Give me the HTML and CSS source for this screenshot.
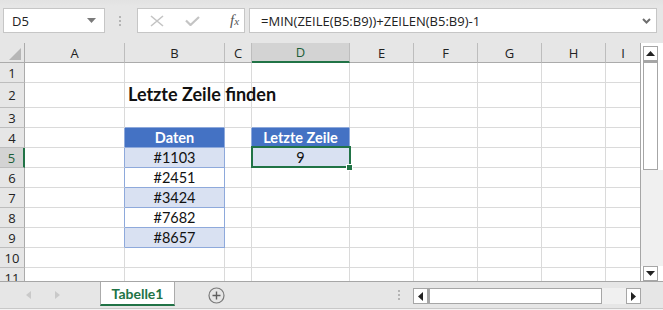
FILE: index.html
```html
<!DOCTYPE html>
<html lang="de">

<head>
  <meta charset="UTF-8">
  <title>Letzte Zeile finden</title>
  <link rel="stylesheet" href="styles.css">
</head>

<body>
  <div class="formula-bar">
    <div class="name-box">
      <span>D5</span>
      <svg class="nb-arrow" width="9" height="5" viewBox="0 0 9 5"><path d="M0 0h9L4.5 5z" fill="#7a7a7a"/></svg>
    </div>
    <div class="grip"><i></i><i></i><i></i></div>
    <div class="fx-buttons">
      <svg width="14" height="12" viewBox="0 0 14 12"><path d="M1 1l12 10M13 1L1 11" stroke="#c4c4c4" stroke-width="1.6" fill="none"/></svg>
      <svg width="15" height="10" viewBox="0 0 15 10"><path d="M1 4.5l4.5 4.5L14 1" stroke="#c4c4c4" stroke-width="2.2" fill="none"/></svg>
      <span class="fx">f<sub>x</sub></span>
    </div>
    <div class="formula-input">
      <span>=MIN(ZEILE(B5:B9))+ZEILEN(B5:B9)-1</span>
      <svg width="9" height="6" viewBox="0 0 9 6"><path d="M1 1l3.5 3.5L8 1" stroke="#6e6e6e" stroke-width="2" fill="none"/></svg>
    </div>
  </div>

  <div class="sheet">
    <div class="grid">
      <!-- column headers -->
      <div class="corner"><svg width="12" height="12" viewBox="0 0 12 12"><path d="M12 0v12H0z" fill="#b6b6b6"/></svg></div>
      <div class="ch">A</div>
      <div class="ch">B</div>
      <div class="ch">C</div>
      <div class="ch active">D</div>
      <div class="ch">E</div>
      <div class="ch">F</div>
      <div class="ch">G</div>
      <div class="ch">H</div>
      <div class="ch">I</div>

      <!-- row 1 -->
      <div class="rh">1</div>
      <div class="c"></div><div class="c"></div><div class="c"></div><div class="c"></div>
      <div class="c"></div><div class="c"></div><div class="c"></div><div class="c"></div><div class="c"></div>

      <!-- row 2 -->
      <div class="rh">2</div>
      <div class="c"></div>
      <div class="c title">Letzte Zeile finden</div>
      <div class="c"></div><div class="c"></div>
      <div class="c"></div><div class="c"></div><div class="c"></div><div class="c"></div><div class="c"></div>

      <!-- row 3 -->
      <div class="rh">3</div>
      <div class="c"></div>
      <div class="c blue-b"></div>
      <div class="c"></div>
      <div class="c blue-b"></div>
      <div class="c"></div><div class="c"></div><div class="c"></div><div class="c"></div><div class="c"></div>

      <!-- row 4 -->
      <div class="rh">4</div>
      <div class="c blue-r"></div>
      <div class="c tbl head">Daten</div>
      <div class="c blue-r"></div>
      <div class="c tbl head">Letzte Zeile</div>
      <div class="c"></div><div class="c"></div><div class="c"></div><div class="c"></div><div class="c"></div>

      <!-- row 5 -->
      <div class="rh active">5</div>
      <div class="c blue-r"></div>
      <div class="c tbl band">#1103</div>
      <div class="c blue-r"></div>
      <div class="c tbl band selected">9</div>
      <div class="c"></div><div class="c"></div><div class="c"></div><div class="c"></div><div class="c"></div>

      <!-- row 6 -->
      <div class="rh">6</div>
      <div class="c blue-r"></div>
      <div class="c tbl">#2451</div>
      <div class="c"></div><div class="c"></div>
      <div class="c"></div><div class="c"></div><div class="c"></div><div class="c"></div><div class="c"></div>

      <!-- row 7 -->
      <div class="rh">7</div>
      <div class="c blue-r"></div>
      <div class="c tbl band">#3424</div>
      <div class="c"></div><div class="c"></div>
      <div class="c"></div><div class="c"></div><div class="c"></div><div class="c"></div><div class="c"></div>

      <!-- row 8 -->
      <div class="rh">8</div>
      <div class="c blue-r"></div>
      <div class="c tbl">#7682</div>
      <div class="c"></div><div class="c"></div>
      <div class="c"></div><div class="c"></div><div class="c"></div><div class="c"></div><div class="c"></div>

      <!-- row 9 -->
      <div class="rh">9</div>
      <div class="c blue-r"></div>
      <div class="c tbl band">#8657</div>
      <div class="c"></div><div class="c"></div>
      <div class="c"></div><div class="c"></div><div class="c"></div><div class="c"></div><div class="c"></div>

      <!-- row 10 -->
      <div class="rh">10</div>
      <div class="c"></div><div class="c"></div><div class="c"></div><div class="c"></div>
      <div class="c"></div><div class="c"></div><div class="c"></div><div class="c"></div><div class="c"></div>

      <!-- row 11 (cut off by the tab bar) -->
      <div class="rh">11</div>
      <div class="c"></div><div class="c"></div><div class="c"></div><div class="c"></div>
      <div class="c"></div><div class="c"></div><div class="c"></div><div class="c"></div><div class="c"></div>
    </div>

    <div class="vscroll">
      <div class="sb-btn"><svg width="9" height="5" viewBox="0 0 9 5"><path d="M0 5h9L4.5 0z" fill="#222"/></svg></div>
      <div class="vthumb"></div>
      <div class="track"></div>
      <div class="sb-btn"><svg width="9" height="5" viewBox="0 0 9 5"><path d="M0 0h9L4.5 5z" fill="#222"/></svg></div>
    </div>
  </div>

  <div class="tabbar">
    <div class="tab-nav">
      <svg width="5" height="8" viewBox="0 0 5 8"><path d="M5 0v8L0 4z" fill="#c9c9c9"/></svg>
      <svg width="5" height="8" viewBox="0 0 5 8"><path d="M0 0v8l5-4z" fill="#c9c9c9"/></svg>
    </div>
    <div class="tab">Tabelle1</div>
    <div class="add-sheet">
      <svg width="17" height="17" viewBox="0 0 17 17"><circle cx="8.5" cy="8.5" r="7.5" stroke="#7a7a7a" stroke-width="1.2" fill="none"/><path d="M8.5 4.5v8M4.5 8.5h8" stroke="#5f5f5f" stroke-width="1.4"/></svg>
    </div>
    <div class="grip tab-grip"><i></i><i></i><i></i></div>
    <div class="hscroll">
      <div class="sb-btn"><svg width="5" height="9" viewBox="0 0 5 9"><path d="M5 0v9L0 4.5z" fill="#222"/></svg></div>
      <div class="hthumb"></div>
      <div class="track"></div>
      <div class="sb-btn"><svg width="5" height="9" viewBox="0 0 5 9"><path d="M0 0v9l5-4.5z" fill="#222"/></svg></div>
    </div>
  </div>
</body>

</html>
```

FILE: styles.css
```css
/* Excel window */
body {
  margin: 0;
  width: 663px;
  height: 310px;
  overflow: hidden;
  background-color: #f3f3f3;
  font-family: "Open Sans", sans-serif;
}

/* formula bar */
.formula-bar {
  height: 43px;
  box-sizing: border-box;
  padding-top: 8px;
  display: flex;
  align-items: flex-start;
  background: linear-gradient(#e2e2e2, #e6e6e6 6px);
}

.name-box {
  margin-left: 3px;
  width: 102px;
  height: 25px;
  box-sizing: border-box;
  border: 1px solid #c6c6c6;
  background-color: #fff;
  display: flex;
  align-items: center;
  justify-content: space-between;
  padding: 0 8px 0 8px;
  font-size: 13px;
  color: #222;
}

.grip {
  display: flex;
  flex-direction: column;
  gap: 2px;
  margin: 8px 16px 0 14px;
}

.grip i {
  display: block;
  width: 2px;
  height: 2px;
  background-color: #b4b4b4;
}

.fx-buttons {
  width: 108px;
  height: 25px;
  box-sizing: border-box;
  border: 1px solid #c6c6c6;
  background-color: #fff;
  display: flex;
  align-items: center;
  padding-left: 12px;
  gap: 21px;
}

.fx {
  margin-left: 9px;
  font-family: "Liberation Serif", serif;
  font-style: italic;
  font-size: 15px;
  color: #555;
}

.fx sub {
  font-size: 11px;
  vertical-align: 0;
}

.formula-input {
  margin-left: 4px;
  width: 408px;
  height: 25px;
  box-sizing: border-box;
  border: 1px solid #c6c6c6;
  background-color: #fff;
  display: flex;
  align-items: center;
  justify-content: space-between;
  padding: 0 5px 0 11px;
  font-size: 13px;
  color: #222;
}

/* sheet */
.sheet {
  display: flex;
  height: 238px;
  overflow: hidden;
}

.grid {
  width: 641px;
  display: grid;
  grid-template-columns: 25px 100px 100px 27px 98px 64px 64px 64px 64px 35px;
  grid-template-rows: 20px 20px 25px repeat(9, 20px);
  overflow: hidden;
  background-color: #fff;
  border-right: 1px solid #a6a6a6;
  box-sizing: border-box;
}

.corner {
  background-color: #e6e6e6;
  border-right: 1px solid #ababab;
  border-bottom: 1px solid #ababab;
  display: flex;
  align-items: flex-end;
  justify-content: flex-end;
  padding: 0 3px 2px 0;
}

.ch {
  background-color: #e6e6e6;
  border-right: 1px solid #bdbdbd;
  border-bottom: 1px solid #ababab;
  display: flex;
  align-items: center;
  justify-content: center;
  font-size: 13px;
  color: #222;
}

.ch.active {
  background-color: #d3d3d3;
  border-bottom: 2px solid #217346;
  color: #1d5e38;
}

.rh {
  background-color: #e6e6e6;
  border-right: 1px solid #ababab;
  border-bottom: 1px solid #bdbdbd;
  display: flex;
  align-items: center;
  justify-content: center;
  font-size: 13px;
  color: #222;
}

.rh.active {
  background-color: #d3d3d3;
  border-right: 2px solid #217346;
  color: #1d5e38;
}

.c {
  border-right: 1px solid #dadada;
  border-bottom: 1px solid #dadada;
  display: flex;
  align-items: center;
  justify-content: center;
  font-family: Lato, sans-serif;
  font-size: 14.5px;
  color: #111;
  white-space: nowrap;
}

.title {
  justify-content: flex-start;
  align-items: flex-end;
  padding: 0 0 2px 3px;
  overflow: visible;
  font-weight: bold;
  font-size: 18px;
  position: relative;
  z-index: 1;
}

/* table */
.blue-b {
  border-bottom-color: #8ea9db;
}

.blue-r {
  border-right-color: #8ea9db;
}

.tbl {
  border-right-color: #8ea9db;
  border-bottom-color: #8ea9db;
}

.tbl.head {
  background-color: #4472c4;
  color: #fff;
  font-weight: bold;
}

.tbl.band {
  background-color: #d9e1f2;
}

.selected {
  position: relative;
}

.selected::after {
  content: "";
  position: absolute;
  top: -2px;
  left: -1px;
  right: -2px;
  bottom: -1px;
  border: 2px solid #217346;
  z-index: 2;
}

.selected::before {
  content: "";
  position: absolute;
  right: -4px;
  bottom: -4px;
  width: 5px;
  height: 5px;
  background-color: #217346;
  border: 1px solid #fff;
  z-index: 3;
}

/* scrollbars */
.vscroll {
  width: 22px;
  background-color: #fff;
  display: flex;
  flex-direction: column;
  align-items: center;
  padding-top: 3px;
  box-sizing: border-box;
}

.vscroll .track {
  flex: 1;
  align-self: stretch;
  background-color: #f0f0f0;
}

.sb-btn {
  width: 15px;
  height: 15px;
  box-sizing: border-box;
  border: 1px solid #a6a6a6;
  background-color: #fff;
  display: flex;
  align-items: center;
  justify-content: center;
}

.vscroll .sb-btn {
  margin-left: -3px;
}

.vthumb {
  width: 15px;
  height: 109px;
  box-sizing: border-box;
  border: 1px solid #a6a6a6;
  border-top-width: 2px;
  background-color: #fff;
  margin-left: -3px;
}

/* sheet tabs */
.tabbar {
  height: 28px;
  box-sizing: border-box;
  border-top: 1px solid #a6a6a6;
  border-bottom: 1px solid #c8c8c8;
  background-color: #e6e6e6;
  display: flex;
  align-items: flex-start;
}

.tab-nav {
  width: 100px;
  height: 26px;
  display: flex;
  align-items: center;
  padding-left: 26px;
  gap: 24px;
  box-sizing: border-box;
}

.tab {
  width: 75px;
  height: 24px;
  box-sizing: border-box;
  background-color: #fff;
  border-left: 1px solid #ababab;
  border-right: 1px solid #ababab;
  border-bottom: 2px solid #217346;
  display: flex;
  align-items: center;
  justify-content: center;
  padding-top: 1px;
  font-family: Lato, sans-serif;
  font-weight: bold;
  font-size: 14px;
  color: #217346;
}

.add-sheet {
  margin-left: 33px;
  height: 26px;
  display: flex;
  align-items: center;
}

.tab-grip {
  margin: 8px 13px 0 173px;
}

.hscroll {
  margin-top: 6px;
  width: 228px;
  height: 16px;
  display: flex;
  background-color: #f0f0f0;
}

.hscroll .sb-btn {
  height: 16px;
}

.hthumb {
  width: 174px;
  box-sizing: border-box;
  border: 1px solid #a6a6a6;
  border-left-width: 2px;
  background-color: #fff;
}

.hscroll .track {
  flex: 1;
}
```
